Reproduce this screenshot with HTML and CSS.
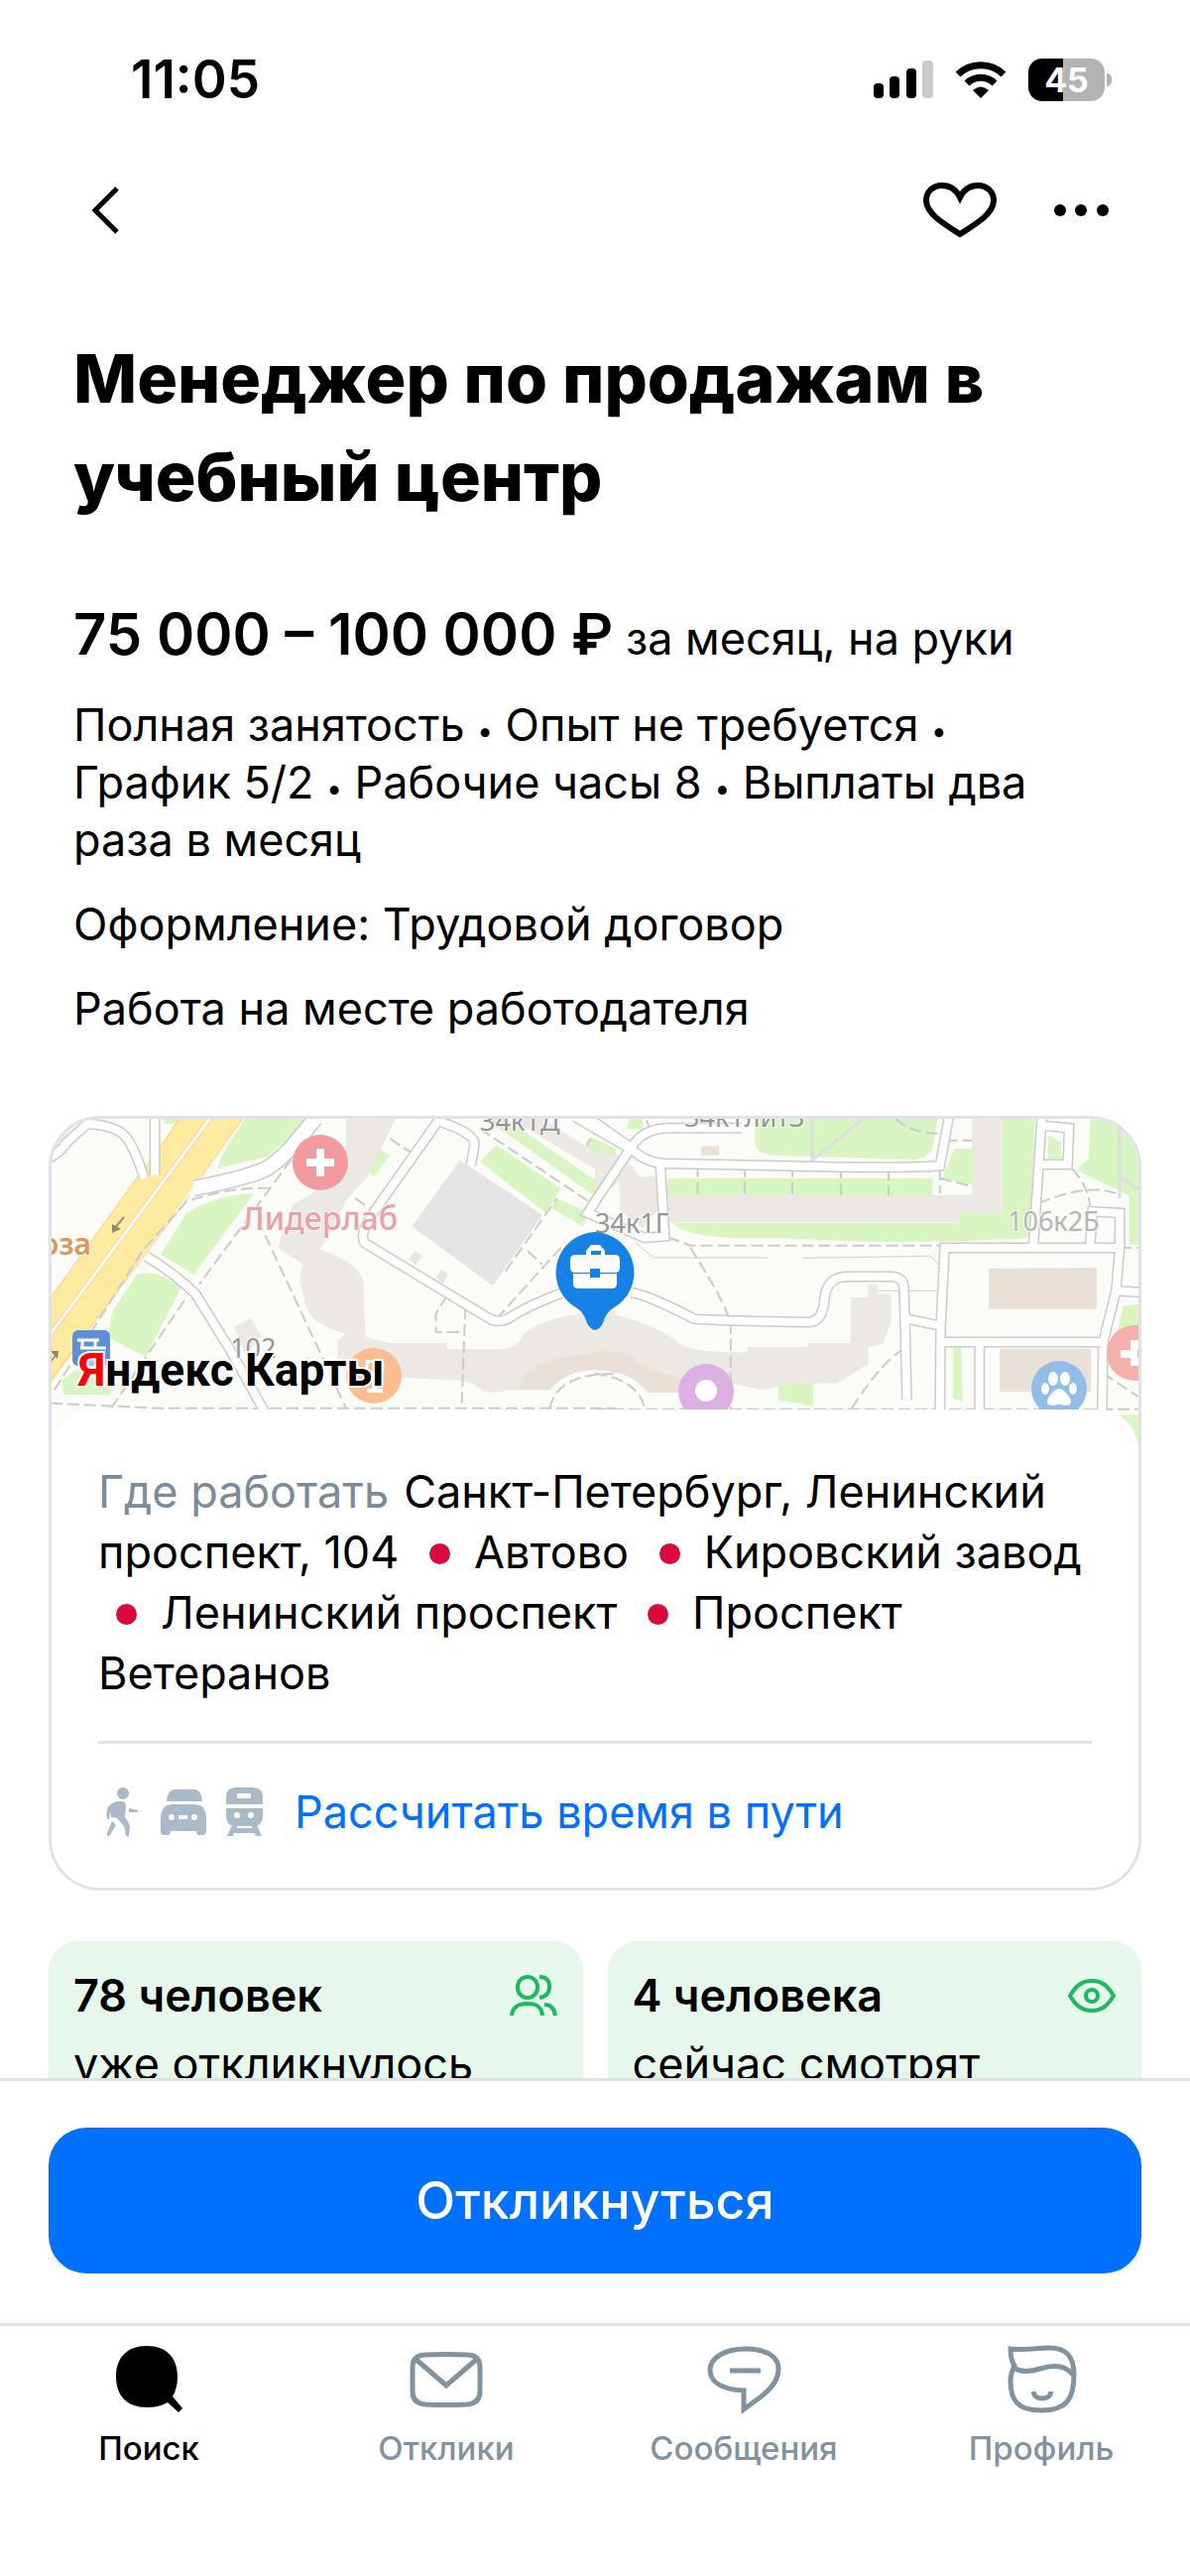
FILE: index.html
```html
<!DOCTYPE html>
<html lang="ru">
<head>
<meta charset="utf-8">
<meta name="viewport" content="width=device-width, initial-scale=1">
<title>Менеджер по продажам в учебный центр</title>
<link rel="stylesheet" href="styles.css">
</head>
<body>
<div class="app">
  <div class="status">
    <time class="status-time">11:05</time>
    <div class="status-icons">
      <svg width="60" height="38" viewBox="0 0 60 38" aria-hidden="true">
        <rect x="0" y="23" width="10" height="15" rx="4"/><rect x="16" y="16" width="10" height="22" rx="4"/><rect x="33" y="8" width="10" height="30" rx="4"/><rect x="49" y="0" width="11" height="38" rx="4" fill="#cbcbcb"/>
      </svg>
      <svg width="52" height="38" viewBox="0 0 52 38" aria-hidden="true">
        <g fill="none" stroke="#000" stroke-width="7"><path d="M3 14a33 33 0 0 1 46 0"/><path d="M12 23a20 20 0 0 1 28 0"/></g>
        <path d="M18 30q8-7 16 0l-8 8z"/>
      </svg>
      <div class="battery"><span class="battery-level">45</span></div>
    </div>
  </div>
  <header class="toolbar">
    <button class="icon-button" aria-label="Назад"><svg width="32" height="52" viewBox="0 0 32 52"><path d="M28 4 6 26l22 22" fill="none" stroke="#000" stroke-width="5"/></svg></button>
    <div class="toolbar-actions">
      <button class="icon-button" aria-label="В избранное"><svg width="76" height="58" viewBox="0 0 76 58"><path d="M38 53C24 44 4 33 4 19 4 10 11 4 20 4c8 0 14 4 18 12 4-8 10-12 18-12 9 0 16 6 16 15 0 14-20 25-34 34z" fill="none" stroke="#000" stroke-width="6"/></svg></button>
      <button class="icon-button" aria-label="Ещё"><svg width="56" height="14" viewBox="0 0 56 14"><circle cx="7" cy="7" r="6"/><circle cx="28" cy="7" r="6"/><circle cx="50" cy="7" r="6"/></svg></button>
    </div>
  </header>
  <main class="content">
    <section class="vacancy">
      <h1 class="title">Менеджер по продажам в учебный центр</h1>
      <p class="salary"><strong class="salary-sum">75&nbsp;000 – 100&nbsp;000&nbsp;₽</strong> за месяц, на руки</p>
      <p class="fact">Полная занятость <span class="dot">•</span> Опыт не требуется <span class="dot">•</span> График 5/2 <span class="dot">•</span> Рабочие часы 8 <span class="dot">•</span> Выплаты два раза в месяц</p>
      <p class="fact">Оформление: Трудовой договор</p>
      <p class="fact">Работа на месте работодателя</p>
    </section>
    <section class="place">
      <svg class="map" viewBox="0 0 1096 330" preserveAspectRatio="xMidYMin slice" role="img" aria-label="Карта">
        <defs>
          <g id="roads-west" transform="translate(-12 -20) scale(.37 .3333)">
            <path class="line" d="M20 180Q50 170 75 130L130 75Q210 80 235 115T285 240"/>
            <path class="line" d="M314 50V230"/>
            <path class="line" d="M1090 60 915 335Q870 400 885 435L1220 660Q1245 680 1275 665 1330 625 1420 588"/>
            <path class="line" d="M1095 70Q1190 105 1185 140L1175 200"/>
            <path class="line" d="M1460 55 1600 145"/>
            <path class="line" d="M290 475Q370 530 425 590L520 760 615 950"/>
          </g>
          <g id="roads-east" transform="translate(548 -20) scale(.37 .3333)">
            <path class="line" d="M-20 55 95 145Q130 190 190 195L560 203Q860 210 940 202L965 50"/>
            <path class="line" d="M100 145 0 310-20 345 135 420 190 415 178 200"/>
            <path class="line" d="M100 145Q130 90 200 88L400 88"/>
            <path class="line" d="M100 585Q150 595 270 665L360 670 580 675Q620 675 625 610 630 535 690 537L810 537Q840 540 842 570L845 680 850 910"/>
            <path class="line" d="M850 665 940 685"/>
            <path class="line" d="M940 945 942 690 953 450 1430 450 1420 580 1385 735 950 735"/>
            <path class="line" d="M1195 440 1218 50M1220 80 1292 88 1288 198 1218 198"/>
            <path class="line" d="M1350 440 1356 340 1430 345 1430 450M1420 580 1490 585"/>
            <path class="line" d="M1048 740 1048 945M1385 735 1382 945"/>
          </g>
          <g id="road-main" transform="translate(-12 -20) scale(.37 .3333)"><path class="line" d="M420 270Q540 245 610 215 660 190 750 60"/></g>
        </defs>
        <rect width="1096" height="330" fill="#fbfbf7"/>
        <g transform="translate(-12 -20) scale(.37 .3333)">
          <g fill="#d9f5c2">
            <path d="M35 160 90 85 125 65H35zM335 50H390L370 75 340 75zM560 50H730Q690 110 620 175L485 210Q490 170 560 60z"/>
            <path d="M330 470 400 345Q480 290 585 285L420 530zM200 640 265 530Q310 510 385 570L290 780 185 720zM60 850 100 820 195 860 195 895 65 893z"/>
            <path d="M925 150 955 170 910 235 888 215zM1245 140 1420 270 1380 345 1200 190zM1410 300 1500 345 1480 385 1395 330z"/>
            <path d="M1215 60H1270L1520 250 1510 290zM1500 115 1570 150V200L1480 160z"/>
          </g>
          <path fill="#ece8e3" d="M835 50H975L890 240 840 300 765 455Q880 500 882 560L888 720 950 738H1110V757H1245Q1300 760 1320 710 1380 650 1570 640V825Q1450 800 1390 880L1275 880Q1250 890 1210 885 1180 850 1120 850L860 835 812 790V730L835 710Q720 680 720 590 700 540 720 500L650 450 690 320 750 280 835 160z"/>
          <path fill="#ece8e3" d="M1285 60 1570 250V200L1370 60zM530 690 575 662 605 720 560 770z"/>
          <path fill="#e9e1d8" d="M1310 840Q1380 770 1570 765V825Q1450 800 1390 880H1310z"/>
          <path fill="#e5e5e7" d="M1145 185 1370 350 1235 565 1015 385zM1025 460 1043 475 1025 500 1005 485zM1095 515 1115 530 1100 557 1080 540z"/>
          <path fill="#ffeb9f" d="M385 50 290 200 30 600V860L560 50z"/>
          <path d="M385 50 340 130M290 200 30 600M560 50 440 235M410 290 30 850" class="thin" stroke="#ffc792"/>
          <path d="M470 50 30 710" class="median" stroke="#ffcc99"/>
          <path d="M470 50 30 710" class="median-core"/>
          <g class="dash"><path d="M740 100 625 275 435 560M40 880 280 460 400 310Q520 265 630 270M595 365 835 935M30 920 320 935H1568M195 935 400 600M1110 595 1080 650V705H1155M1160 630 1150 935M1245 665 1420 450M955 120 1010 160M860 300 910 340M1200 90 1510 320M1330 460 1370 500M1270 520 1410 300M1390 935Q1410 830 1568 830M1530 80 1490 140"/></g>
        </g>
        <g transform="translate(548 -20) scale(.37 .3333)">
          <g fill="#d9f5c2">
            <path d="M95 60H130V90L85 90zM435 50H935L920 150Q905 180 870 183L480 170Q435 160 437 130zM200 240H920V290H195zM980 150H1030V260L945 240zM1110 50H1200L1185 420Q850 445 500 420 260 430 210 375H990V345H1110z"/>
            <path d="M1235 110 1270 130V180H1235zM1350 50H1490V440H1455V290L1310 215 1345 180zM1440 625 1490 620V690L1420 720zM500 860H595V930L500 910zM975 750H998L1002 915 975 905zM0 120 60 165 35 195 0 180zM1400 955H1490V1050H1400z"/>
          </g>
          <path fill="#ece8e3" d="M1028 50H1110V345H990V373H200V290H1028zM0 170Q70 140 120 235H195L175 330 130 390 70 340 65 250 0 310z"/>
          <path fill="#ece8e3" d="M-10 640Q160 670 230 740 280 770 415 765V750H580V738H697V600H745V560H770V590H807V675L785 740 745 750V800L660 860H540L460 880 370 860 240 885H140Q100 820 0 820z"/>
          <path fill="#e9e1d8" d="M-10 765Q100 755 120 800L230 845V888H145Q100 820 0 820zM1073 513 1368 510V635H1073zM1103 755H1352V885H1103zM290 142H338V170H290z"/>
          <g class="dash"><path d="M200 418 260 443H950M260 450Q370 640 370 690V935M0 938H1480M700 935Q790 780 850 752M280 200V290M408 200V290M538 200V290M670 205V290M800 210V290M940 210V285M820 60Q860 105 950 105M955 125H1028M940 240 1020 262M1210 315Q1350 250 1430 290M1300 210Q1350 270 1350 340M1385 830 1480 900M0 830Q120 850 135 935M140 65 155 100M1430 450H1480"/></g>
          <path class="thin" stroke="#cfcfcf" d="M110 435 160 480H470M568 481 910 475Q930 485 933 500M770 580H935"/>
          <path class="path" d="M592 50V185L570 203M592 185 730 60M1430 90V300M1430 235 1490 280"/>
        </g>
        <use href="#roads-west" class="casing"/><use href="#roads-east" class="casing"/><use href="#road-main" class="casing-main"/>
        <use href="#roads-west" class="core"/><use href="#roads-east" class="core"/><use href="#road-main" class="core-main"/>
        <g fill="none" stroke="#9b9478" stroke-width="2"><path d="M73 99 62 112M-2 246 6 236"/></g><path d="M61 106l9 5-9 4zM-1 234l8 0-1 8z" fill="#8e886e"/>
        <g class="map-labels">
          <text x="432" y="12">34к1Д</text><text x="638" y="8">34к1литЗ</text><text x="548" y="115">34к1Г</text><text x="964" y="113" fill="#b5b5b5">106к2Б</text><text x="180" y="241">102</text>
          <text x="192" y="112" class="map-clinic">Лидерлаб</text><text x="40" y="137" class="map-shop" text-anchor="end">роза</text>
        </g>
        <circle cx="271" cy="44" r="28" fill="#f29a9d"/><path d="M267 30h8v10h10v8h-10v10h-8V48h-10v-8h10z" fill="#fff"/>
        <rect x="21" y="213" width="38" height="36" rx="6" fill="#5d8fd9"/><path d="M26 223h22M29 231h26M31 223v8M44 223v8" stroke="#fff" stroke-width="3"/><path d="M27 239h26v10H27z" fill="#a9c2ea"/>
        <circle cx="325" cy="259" r="28" fill="#fcbe90"/><path d="M317 243h18q2 17-6 20v9h5v4h-16v-4h5v-9q-8-3-6-20z" fill="#fff"/><path d="M320 246h12l1 8h-14z" fill="#fcbe90"/>
        <circle cx="660" cy="275" r="28" fill="#dcb0e3"/><circle cx="660" cy="274" r="11" fill="#fff"/>
        <circle cx="1016" cy="272" r="28" fill="#93bde9"/><g fill="#fff"><ellipse cx="1010" cy="262" rx="5" ry="7"/><ellipse cx="1022" cy="262" rx="5" ry="7"/><ellipse cx="1002" cy="272" rx="4" ry="6"/><ellipse cx="1030" cy="272" rx="4" ry="6"/><path d="M1016 272c5 0 12 9 12 13 0 6-8 3-12 3s-12 3-12-3c0-4 7-13 12-13z"/></g>
        <circle cx="1092" cy="236" r="28" fill="#f4b0aa"/><path d="M1088 223h8v10h-1v8h1v8h-8v-8h-10v-8h10z" fill="#fff"/>
        <path d="M548 114a41 41 0 0 0-18 77c6 4 8 9 10 15q4 7 8 7t8-7c2-6 4-11 10-15a41 41 0 0 0-18-77z" fill="#1782e5"/>
        <path d="M528 137h11v-4l5-6h9l5 6v4h10q5 0 5 5v8q0 5-5 5h-15v-4h-10v4h-15q-5 0-5-5v-8q0-5 5-5zm16 0h10v-4h-10zM526 156h17v4h10v-4h17v10q0 5-5 5h-34q-5 0-5-5z" fill="#fff"/>
        <text x="27" y="269" class="map-logo"><tspan fill="#f00">Я</tspan>ндекс Карты</text>
      </svg>
      <div class="place-body">
        <p class="address"><span class="address-label">Где работать</span>Санкт-Петербург, Ленинский проспект, 104 <i class="metro"></i>Автово <i class="metro"></i>Кировский завод <i class="metro"></i>Ленинский проспект <i class="metro"></i>Проспект Ветеранов</p>
        <a class="route" href="#route">
          <svg width="168" height="52" viewBox="0 0 168 52" fill="#abbac8" aria-hidden="true">
            <circle cx="25" cy="7" r="6"/>
            <path d="M20 15h5q3 1 3 5l-1 11q4 5 5 9l-1 10h-3l-2-10-7-8-6-1-1-6-1 8h-2q-1-6 0-10 3-7 11-8zM14 35l4 4-6 10-3 1v-3z"/><path d="M31 22l9 2v2h-9z"/>
            <path d="M69 15q1-12 8-12h20q7 0 8 12z"/>
            <path d="M75 18h22q12 0 12 15v12q0 4-4 4h-3q-3 0-3-4H73q0 4-3 4h-3q-4 0-4-4V33q0-15 12-15z"/>
            <path d="M129 18v-7q0-10 10-10h17q10 0 10 10v7zM129 22h37v8q0 10-10 10h-17q-10 0-10-10z"/>
            <path d="M135 39h5v3h15v-3h5l5 11h-6l-1-3h-21l-1 3h-6z"/>
            <g fill="#fff"><circle cx="74" cy="31" r="3"/><circle cx="97" cy="31" r="3"/><rect x="81" y="29" width="9" height="4"/><rect x="140" y="7" width="14" height="5"/><circle cx="140" cy="29" r="3"/><circle cx="154" cy="29" r="3"/><rect x="140" y="40" width="15" height="2"/></g>
          </svg>
          Рассчитать время в пути
        </a>
      </div>
    </section>
    <section class="stats">
      <div class="stat">
        <div class="stat-head"><strong class="stat-count">78 человек</strong>
          <svg width="50" height="44" viewBox="0 0 50 44" fill="none" stroke="#1cb961" stroke-width="4" aria-hidden="true"><rect x="9" y="3" width="20" height="21" rx="10"/><path d="M31 3c7 0 10 4 10 10s-3 10-10 11M3 42c1-10 8-12 16-12s14 2 15 12M36 31c7 0 10 4 11 11"/></svg></div>
        <span class="stat-text">уже откликнулось</span>
      </div>
      <div class="stat">
        <div class="stat-head"><strong class="stat-count">4 человека</strong>
          <svg width="50" height="44" viewBox="0 0 50 44" fill="none" stroke="#1cb961" stroke-width="4" aria-hidden="true"><path d="M3 22C9 12 15 7 25 7s16 5 22 15c-6 10-12 15-22 15S9 32 3 22z"/><circle cx="25" cy="22" r="6"/></svg></div>
        <span class="stat-text">сейчас смотрят</span>
      </div>
    </section>
  </main>
  <div class="apply"><button class="apply-button">Откликнуться</button></div>
  <nav class="tabs">
    <a class="tab tab-active" href="#search"><svg width="76" height="72" viewBox="0 0 76 72"><path d="M36 3c20 0 31 12 31 31q0 12-5 20l10 12-4 4-11-10q-8 5-21 5C16 65 5 53 5 34S16 3 36 3z"/></svg>Поиск</a>
    <a class="tab" href="#replies"><svg width="76" height="72" viewBox="0 0 76 72" fill="none" stroke="#8293a0" stroke-width="5"><path d="M17 12q21-1 42 0 13 0 13 13v24q0 12-13 13-21 1-42 0Q4 61 4 49V25Q4 12 17 12zM8 17l30 26 30-26"/></svg>Отклики</a>
    <a class="tab" href="#messages"><svg width="76" height="72" viewBox="0 0 76 72" fill="none" stroke="#8293a0" stroke-width="5"><path d="M40 6c21 0 33 8 33 20 0 13-9 22-20 30L38 67V48C15 47 4 39 4 27S19 6 40 6z"/><path d="M24 28h31"/></svg>Сообщения</a>
    <a class="tab" href="#profile"><svg width="76" height="72" viewBox="0 0 76 72" fill="none" stroke="#8293a0" stroke-width="5"><path d="M7 6c15 2 25-1 39-1 18 0 25 9 25 27 0 25-8 36-33 36S7 57 7 38q0-7 4-15Q7 17 7 6zM9 24c7 6 18 5 28 2 13-4 25-4 33 6"/><path d="M30 49q1 7 9 7t9-7"/></svg>Профиль</a>
  </nav>
</div>
</body>
</html>
```
FILE: styles.css
```css
* { box-sizing: border-box; }
body { margin: 0; background: #fff; color: #000; font-family: Inter, "Noto Sans", sans-serif; font-size: 45px; line-height: 58px; }
h1, p { margin: 0; }
button { border: 0; padding: 0; background: none; font: inherit; cursor: pointer; }
a { color: inherit; text-decoration: none; }
svg { display: block; flex: none; }

.app { display: flex; flex-direction: column; height: 100vh; overflow: hidden; }

.status { display: flex; justify-content: space-between; align-items: center; flex: none; height: 160px; padding: 0 80px 0 132px; }
.status-time { font-size: 53px; font-weight: 600; }
.status-icons { display: flex; align-items: center; gap: 22px; }
.battery { position: relative; display: flex; justify-content: center; width: 77px; height: 43px; margin-right: 6px; border-radius: 14px; background: linear-gradient(to right, #000 45%, #b3b3b3 45%); color: #fff; }
.battery::after { content: ""; position: absolute; left: 79px; top: 15px; width: 5px; height: 13px; border-radius: 0 6px 6px 0; background: #b3b3b3; }
.battery-level { font-size: 34px; font-weight: 700; line-height: 43px; }

.toolbar { display: flex; justify-content: space-between; align-items: center; flex: none; height: 104px; padding: 0 82px 0 90px; }
.toolbar-actions { display: flex; align-items: center; gap: 56px; }

.content { flex: 1; min-height: 0; overflow: hidden; padding: 68px 49px 0; }
.vacancy { display: flex; flex-direction: column; gap: 27px; padding: 0 25px; }
.title { margin-bottom: 46px; font-size: 68px; font-weight: 800; line-height: 99px; }
.salary-sum { font-size: 58px; font-weight: 600; line-height: 72px; }
.dot { font-size: 28px; line-height: 1; }

.place { margin-top: 79px; border: 3px solid #dfe2e8; border-radius: 52px; overflow: hidden; }
.map { width: 100%; height: 330px; }
.line, .thin, .median, .median-core, .path, .dash path { fill: none; vector-effect: non-scaling-stroke; }
.casing { stroke: #cbcbcb; stroke-width: 11px; }
.core { stroke: #fff; stroke-width: 8px; }
.casing-main { stroke: #cbcbcb; stroke-width: 17px; }
.core-main { stroke: #fff; stroke-width: 14px; }
.thin { stroke-width: 1px; }
.median { stroke-width: 5px; }
.median-core { stroke: #fff; stroke-width: 3px; }
.path { stroke: #dcdfe0; stroke-width: 3px; }
.dash path { stroke: #cbcbcb; stroke-width: 2px; stroke-dasharray: 12 5; }
.map-labels { fill: #959595; stroke: #fafaf5; stroke-width: 2px; paint-order: stroke; font-family: "Noto Sans", sans-serif; font-size: 27px; }
.map-clinic { fill: #eba0a8; font-size: 32px; font-weight: 500; }
.map-shop { fill: #dc985c; font-size: 30px; font-weight: 600; }
.map-logo { stroke: #fff; stroke-width: 4px; paint-order: stroke; font-family: Roboto, "Noto Sans", sans-serif; font-size: 46px; font-weight: 700; }

.place-body { position: relative; margin-top: -37px; padding: 52px 47px 47px; border-radius: 40px 40px 0 0; background: #fff; }
.address { line-height: 61px; }
.address-label { margin-right: 15px; color: #7c8b98; }
.metro { display: inline-block; width: 21px; height: 21px; margin: 0 24px 4px 18px; border-radius: 50%; background: #d80a3c; }
.route { display: flex; align-items: center; gap: 30px; margin-top: 38px; padding-top: 40px; border-top: 3px solid #dfe2e6; color: #0070ff; }

.stats { display: grid; grid-template-columns: 1fr 1fr; gap: 25px; margin-top: 51px; }
.stat { padding: 26px 25px; border-radius: 30px; background: #e6f8ec; }
.stat-head { display: flex; justify-content: space-between; align-items: center; margin-bottom: 11px; }
.stat-count { font-weight: 600; }

.apply { flex: none; padding: 47px 49px 50px; border-top: 3px solid #dfe1e5; }
.apply-button { width: 100%; height: 147px; border-radius: 38px; background: #0070ff; color: #fff; font-size: 52px; font-weight: 500; }

.tabs { display: grid; grid-template-columns: repeat(4, 1fr); flex: none; padding: 17px 0 109px; border-top: 3px solid #dfe1e5; }
.tab { display: flex; flex-direction: column; align-items: center; gap: 14px; color: #8293a0; font-size: 33px; font-weight: 500; line-height: 40px; }
.tab-active { color: #000; }
```
